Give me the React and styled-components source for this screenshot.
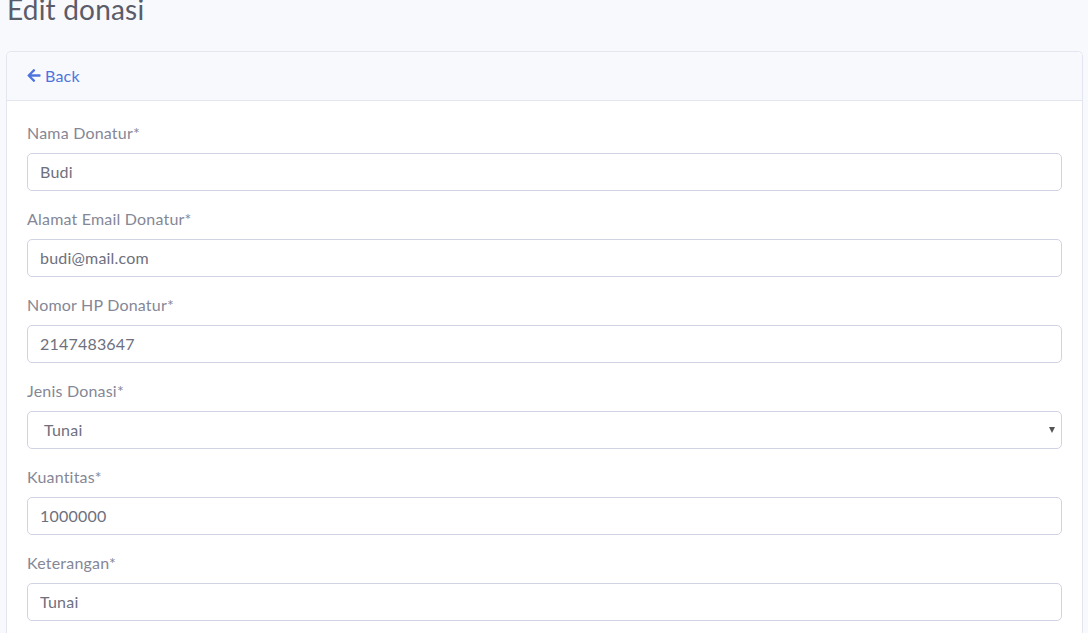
import React from "react";
import styled, { createGlobalStyle } from "styled-components";

const Global = createGlobalStyle`
  html, body { margin: 0; padding: 0; background: #f8f9fc; overflow: hidden; }
  body { font-family: Lato, "Noto Sans", sans-serif; font-size: 16px; color: #858796; line-height: 1.5; }
  * { box-sizing: border-box; }
`;

const Page = styled.div`
  padding: 0 5px 0 6px;
  margin-top: -7px;
`;

const Title = styled.h3`
  margin: 0 0 24px 1px;
  font-size: 28px;
  font-weight: 400;
  line-height: 1.2;
  color: #5a5c69;
  letter-spacing: 0.2px;
`;

const Card = styled.div`
  background: #fff;
  border: 1px solid #e3e6f0;
  border-radius: 5px;
`;

const CardHeader = styled.div`
  background: #f8f9fc;
  border-bottom: 1px solid #e3e6f0;
  padding: 12px 20px;
  border-radius: 5px 5px 0 0;
`;

const BackLink = styled.a`
  display: flex;
  width: fit-content;
  height: 24px;
  align-items: center;
  gap: 4px;
  color: #4e73df;
  text-decoration: none;
  font-size: 16px;
  line-height: 24px;
  letter-spacing: 0.2px;
  svg { display: block; }
`;

const CardBody = styled.div`
  padding: 20px;
`;

const Group = styled.div`
  margin-bottom: 16px;
`;

const Label = styled.label`
  display: block;
  margin-bottom: 8px;
  color: #858796;
  letter-spacing: 0.2px;
`;

const Input = styled.input`
  display: block;
  width: 100%;
  height: 38px;
  padding: 6px 12px;
  font-family: inherit;
  font-size: 16px;
  color: #6e707e;
  background: #fff;
  border: 1px solid #d1d3e2;
  border-radius: 5px;
  outline: none;
  letter-spacing: 0.2px;
`;

const SelectWrap = styled.div`
  position: relative;
`;

const Select = styled.select`
  display: block;
  width: 100%;
  height: 38px;
  padding: 6px 12px;
  font-family: inherit;
  font-size: 16px;
  color: #6e707e;
  background: #fff;
  border: 1px solid #d1d3e2;
  border-radius: 5px;
  appearance: none;
  -webkit-appearance: none;
  outline: none;
  text-indent: 4px;
  letter-spacing: 0.2px;
`;

const Caret = styled.span`
  position: absolute;
  right: 7px;
  top: 16px;
  width: 0;
  height: 0;
  border-left: 3.5px solid transparent;
  border-right: 3.5px solid transparent;
  border-top: 6px solid #555;
  pointer-events: none;
`;

const fields = [
  { label: "Nama Donatur*", value: "Budi" },
  { label: "Alamat Email Donatur*", value: "budi@mail.com" },
  { label: "Nomor HP Donatur*", value: "2147483647" },
  { label: "Jenis Donasi*", value: "Tunai", select: true },
  { label: "Kuantitas*", value: "1000000" },
  { label: "Keterangan*", value: "Tunai" },
];

export default function App() {
  return (
    <>
      <Global />
      <Page>
        <Title>Edit donasi</Title>
        <Card>
          <CardHeader>
            <BackLink href="#">
              <svg width="14" height="15" viewBox="0 0 448 512" fill="#4e73df">
                <path d="M257.5 445.1l-22.2 22.2c-9.4 9.4-24.6 9.4-33.9 0L7 273c-9.4-9.4-9.4-24.6 0-33.9L201.4 44.7c9.4-9.4 24.6-9.4 33.9 0l22.2 22.2c9.5 9.5 9.3 25-.4 34.3L136.6 216H424c13.3 0 24 10.7 24 24v32c0 13.3-10.7 24-24 24H136.6l120.5 114.8c9.8 9.3 10 24.8.4 34.3z" />
              </svg>
              Back
            </BackLink>
          </CardHeader>
          <CardBody>
            {fields.map((f) => (
              <Group key={f.label}>
                <Label>{f.label}</Label>
                {f.select ? (
                  <SelectWrap>
                    <Select defaultValue={f.value}>
                      <option>Tunai</option>
                      <option>Barang</option>
                    </Select>
                    <Caret />
                  </SelectWrap>
                ) : (
                  <Input defaultValue={f.value} />
                )}
              </Group>
            ))}
          </CardBody>
        </Card>
      </Page>
    </>
  );
}
